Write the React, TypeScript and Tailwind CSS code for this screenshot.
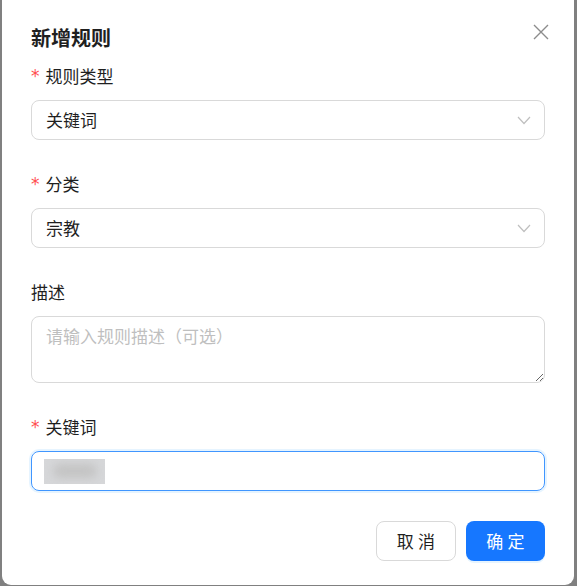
import React from 'react';

const font = { fontFamily: '"Noto Sans CJK SC", "Noto Sans", sans-serif' };

function Label({ text, required }: { text: string; required?: boolean }) {
  return (
    <div className="flex items-center h-[24px] text-[17px] leading-[24px] text-[#1f1f1f]">
      {required && <span className="text-[#ff4d4f] text-[17px] mr-[6px] leading-none" style={{ fontFamily: '"DejaVu Sans", sans-serif' }}>*</span>}
      <span>{text}</span>
    </div>
  );
}

function Chevron() {
  return (
    <svg width="14" height="9" viewBox="0 0 14 9" fill="none">
      <path d="M1 1l6 6.5L13 1" stroke="#bfbfbf" strokeWidth="1.2" />
    </svg>
  );
}

function FakeSelect({ value }: { value: string }) {
  return (
    <div className="h-[40px] rounded-[8px] border border-[#d9d9d9] bg-white flex items-center justify-between pl-[14px] pr-[13px] text-[17px] text-[#1f1f1f]">
      <span>{value}</span>
      <Chevron />
    </div>
  );
}

export default function App() {
  return (
    <div className="min-h-screen h-[586px] bg-[#808080] overflow-hidden" style={font}>
      <div className="ml-[2px] w-[572px] h-[585px] bg-white rounded-b-[9px] px-[29px] pt-[24px] relative">
        {/* Header */}
        <h2 className="text-[20px] leading-[28px] font-bold text-[#1f1f1f]">新增规则</h2>
        <button className="absolute right-[25px] top-[24px] w-[16px] h-[16px]">
          <svg width="16" height="16" viewBox="0 0 16 16" fill="none">
            <path d="M1 1l14 14M15 1L1 15" stroke="#8c8c8c" strokeWidth="1.4" />
          </svg>
        </button>

        <div className="flex flex-col mt-[12px]">
          <Label text="规则类型" required />
          <div className="mt-[12px]">
            <FakeSelect value="关键词" />
          </div>

          <div className="mt-[32px]">
            <Label text="分类" required />
          </div>
          <div className="mt-[12px]">
            <FakeSelect value="宗教" />
          </div>

          <div className="mt-[32px]">
            <Label text="描述" />
          </div>
          <textarea
            className="mt-[12px] h-[67px] rounded-[8px] border border-[#d9d9d9] px-[14px] py-[7px] text-[17px] leading-[24px] text-[#1f1f1f] placeholder:text-[#bfbfbf] outline-none block"
            placeholder="请输入规则描述（可选）"
            style={font}
          />

          <div className="mt-[32px]">
            <Label text="关键词" required />
          </div>
          <div className="mt-[12px] h-[40px] rounded-[8px] border border-[#4096ff] shadow-[0_0_0_2px_rgba(5,145,255,0.1)] flex items-center pl-[12px]">
            <div className="w-[61px] h-[25px] bg-[#d6d7d9] overflow-hidden flex items-center justify-center">
              <span className="w-[44px] h-[14px] rounded-full bg-[#c4c4c4] blur-[4px]" />
            </div>
          </div>

          <div className="flex justify-end gap-[10px] mt-[30px]">
            <button className="w-[80px] h-[40px] rounded-[8px] border border-[#d9d9d9] bg-white text-[17px] text-[#1f1f1f] tracking-[0.25em] pl-[4px]">
              取消
            </button>
            <button className="w-[79px] h-[40px] rounded-[8px] bg-[#1677ff] text-white text-[17px] tracking-[0.25em] pl-[4px] shadow-[0_2px_0_rgba(5,145,255,0.1)]">
              确定
            </button>
          </div>
        </div>
      </div>
    </div>
  );
}
